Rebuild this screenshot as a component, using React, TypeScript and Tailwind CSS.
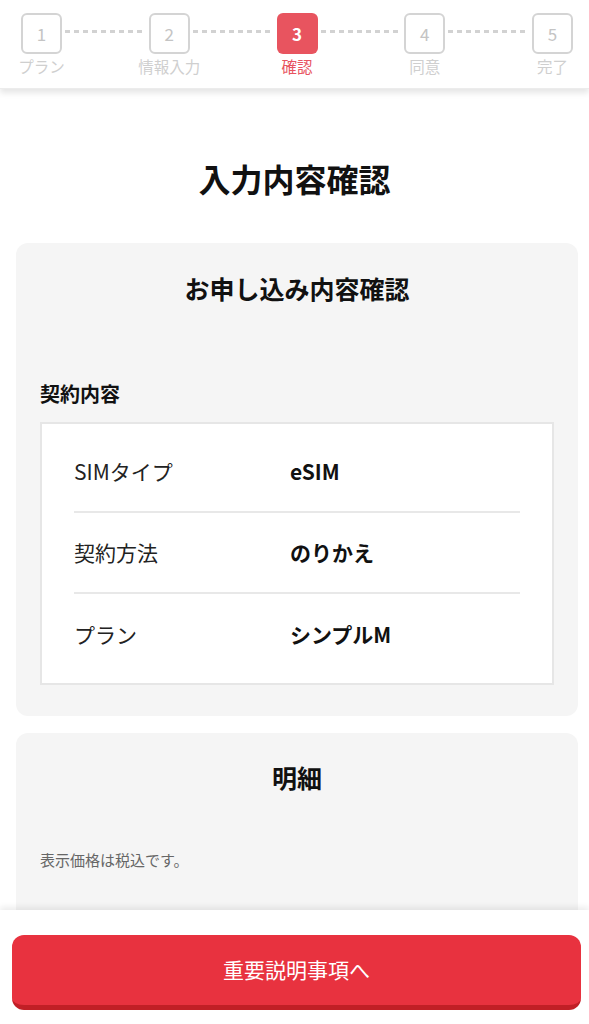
import React from "react"

const steps = [
  { n: 1, label: "プラン" },
  { n: 2, label: "情報入力" },
  { n: 3, label: "確認" },
  { n: 4, label: "同意" },
  { n: 5, label: "完了" },
]

const rows = [
  { k: "SIMタイプ", v: "eSIM" },
  { k: "契約方法", v: "のりかえ" },
  { k: "プラン", v: "シンプルM" },
]

function Stepper() {
  return (
    <div className="flex items-start pl-[21px] pr-[16px] pt-[13px] h-[88px]">
      {steps.map((s, i) => {
        const active = s.n === 3
        return (
          <React.Fragment key={s.n}>
            {i > 0 && (
              <div className="flex-1 mt-[17px] mx-[3px] h-[3px] bg-[repeating-linear-gradient(90deg,#d2d2d2_0_5px,transparent_5px_9px)]" />
            )}
            <div className="flex flex-col items-center w-[41px]">
              <div
                className={
                  active
                    ? "w-[41px] h-[41px] rounded-md bg-[#e8545f] text-white flex items-center justify-center text-[17px] font-bold"
                    : "w-[41px] h-[41px] rounded-md border-2 border-[#d4d4d4] text-[#c4c4c4] flex items-center justify-center text-[17px]"
                }
              >
                {s.n}
              </div>
              <span
                className={
                  "mt-[1px] whitespace-nowrap text-[15.5px] leading-[22px] " +
                  (active ? "text-[#e8545f]" : "text-[#cfcfcf]")
                }
              >
                {s.label}
              </span>
            </div>
          </React.Fragment>
        )
      })}
    </div>
  )
}

export default function App() {
  return (
    <div
      className="h-screen overflow-hidden bg-white text-[#111]"
      style={{ fontFamily: '"Noto Sans CJK JP", "Noto Sans", sans-serif' }}
    >
      {/* Header */}
      <header className="bg-white shadow-[0_4px_6px_rgba(0,0,0,0.1)] border-b border-[#ececec]">
        <Stepper />
      </header>

      <h1 className="text-center text-[32px] font-bold leading-[40px] mt-[69px] mb-[45px]">
        入力内容確認
      </h1>

      {/* Contract card */}
      <section className="ml-4 mr-[11px] bg-[#f5f5f5] rounded-xl px-6 pt-[28px] pb-[31px]">
        <h2 className="text-center text-[25px] font-bold leading-[34px]">お申し込み内容確認</h2>
        <h3 className="mt-[75px] text-[20px] font-bold leading-[28px]">契約内容</h3>
        <div className="mt-[14px] bg-white border-2 border-[#e6e6e6] py-[8px] px-[32px]">
          {rows.map((r, i) => (
            <div
              key={r.k}
              className={
                "flex items-center h-[81px] text-[21px] " +
                (i < rows.length - 1 ? "border-b-2 border-[#e8e8e8]" : "")
              }
            >
              <span className="w-[216px] text-[#222]">{r.k}</span>
              <span className="font-bold">{r.v}</span>
            </div>
          ))}
        </div>
      </section>

      {/* Detail card */}
      <section className="ml-4 mr-[11px] mt-[17px] bg-[#f5f5f5] rounded-xl px-6 pt-[27px] pb-[80px]">
        <h2 className="text-center text-[25px] font-bold leading-[34px]">明細</h2>
        <p className="mt-[55px] text-[15px] text-[#666] leading-[22px]">表示価格は税込です。</p>
      </section>

      {/* Footer */}
      <div className="fixed bottom-0 left-0 right-0 h-[114px] bg-white shadow-[0_-3px_6px_rgba(0,0,0,0.08)] pl-3 pr-2 pt-[25px]">
        <button className="w-full h-[75px] rounded-xl bg-[#e8323f] border-b-[5px] border-[#c11f26] text-white text-[21px]">
          重要説明事項へ
        </button>
      </div>
    </div>
  )
}
